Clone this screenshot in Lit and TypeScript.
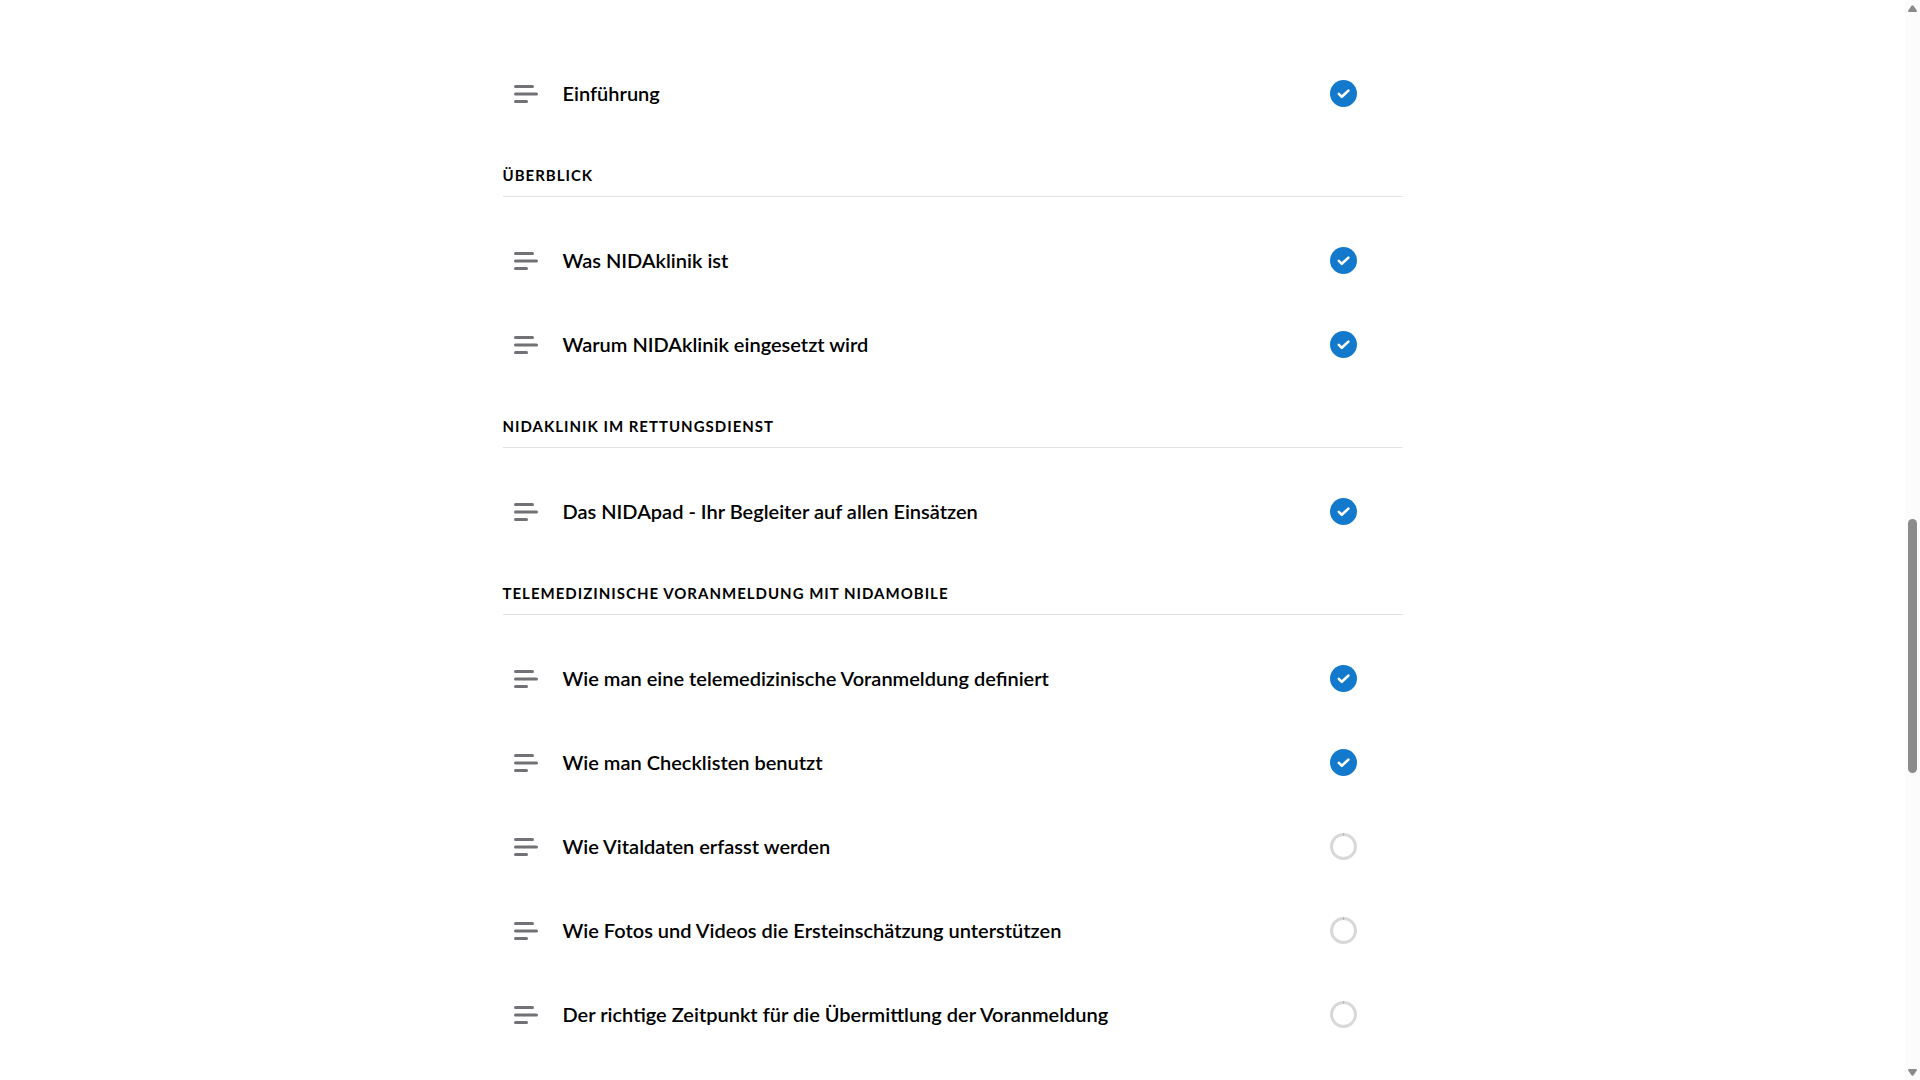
import { LitElement, html, css, svg } from "lit";
import { customElement, property } from "lit/decorators.js";

interface Lesson {
  title: string;
  done: boolean;
}

interface Section {
  title?: string;
  lessons: Lesson[];
}

const sections: Section[] = [
  { lessons: [{ title: "Einführung", done: true }] },
  {
    title: "Überblick",
    lessons: [
      { title: "Was NIDAklinik ist", done: true },
      { title: "Warum NIDAklinik eingesetzt wird", done: true },
    ],
  },
  {
    title: "NIDAklinik im Rettungsdienst",
    lessons: [{ title: "Das NIDApad - Ihr Begleiter auf allen Einsätzen", done: true }],
  },
  {
    title: "Telemedizinische Voranmeldung mit NIDAmobile",
    lessons: [
      { title: "Wie man eine telemedizinische Voranmeldung definiert", done: true },
      { title: "Wie man Checklisten benutzt", done: true },
      { title: "Wie Vitaldaten erfasst werden", done: false },
      { title: "Wie Fotos und Videos die Ersteinschätzung unterstützen", done: false },
      { title: "Der richtige Zeitpunkt für die Übermittlung der Voranmeldung", done: false },
    ],
  },
];

/* One lesson link: text icon, title and completion mark. */
@customElement("lesson-row")
export class LessonRow extends LitElement {
  @property() title = "";
  @property({ type: Boolean }) done = false;

  static styles = css`
    :host {
      display: block;
    }
    .row {
      display: flex;
      align-items: center;
      height: 84px;
      box-sizing: border-box;
      padding: 0 46px 0 11px;
      color: #000;
      text-decoration: none;
    }
    .lines {
      flex: none;
      width: 24px;
      height: 20px;
      margin-right: 25px;
    }
    .title {
      flex: 1;
      font-size: 20px;
      line-height: 30px;
      font-weight: 600;
    }
    .status {
      flex: none;
      width: 27px;
      height: 27px;
    }
  `;

  render() {
    const mark = this.done
      ? svg`<circle cx="13.5" cy="13.5" r="13.5" fill="#1379cd"></circle>
          <path d="M8.8 13.8l3 3 6.6-6.2" fill="none" stroke="#fff" stroke-width="2.6"
            stroke-linecap="round" stroke-linejoin="round"></path>`
      : svg`<circle cx="13.5" cy="13.5" r="12" fill="none" stroke="#d8d8d8" stroke-width="3"></circle>
          <path d="M13.5 0v3" stroke="#a9b8c4" stroke-width="1"></path>`;
    return html`<a class="row" href="#">
      <svg class="lines" viewBox="0 -2 24 20" aria-hidden="true">
        <g fill="#717176">
          <rect width="20" height="3" rx="1.5"></rect>
          <rect y="7.5" width="24" height="3" rx="1.5"></rect>
          <rect y="15" width="14" height="3" rx="1.5"></rect>
        </g>
      </svg>
      <span class="title">${this.title}</span>
      <svg class="status" viewBox="0 0 27 27" aria-hidden="true">${mark}</svg>
    </a>`;
  }
}

@customElement("app-root")
export class AppRoot extends LitElement {
  static styles = css`
    :host {
      display: grid;
      grid-template-columns: 1fr 15px;
      min-height: 100vh;
      background: #fff;
      color: #000;
      font-family: Lato, Carlito, "Open Sans", sans-serif;
    }
    .content {
      padding: 51px 24px 0;
    }
    .outline {
      max-width: 900px;
      margin: 0 auto;
    }
    .heading {
      margin: 0 0 21px;
      padding: 28px 0 9px;
      border-bottom: 1px solid #e2e2e2;
      font-size: 15px;
      line-height: 24px;
      font-weight: 700;
      letter-spacing: 1px;
      text-transform: uppercase;
    }
    .scrollbar {
      position: sticky;
      top: 0;
      height: 100vh;
      box-sizing: border-box;
      padding: 5px 3px 4px;
      display: flex;
      flex-direction: column;
      align-items: center;
      background: #fcfcfc;
    }
    .arrow {
      flex: none;
      width: 9px;
      height: 7px;
      fill: #8b8b8b;
    }
    .before {
      flex: 507;
    }
    .thumb {
      flex: 254;
      width: 9px;
      border-radius: 5px;
      background: #8b8b8b;
    }
    .after {
      flex: 296;
    }
  `;

  render() {
    return html`
      <main class="content">
        <div class="outline">
          ${sections.map(
            (s) => html`<section>
              ${s.title ? html`<h2 class="heading">${s.title}</h2>` : ""}
              ${s.lessons.map((l) => html`<lesson-row .title=${l.title} .done=${l.done}></lesson-row>`)}
            </section>`
          )}
        </div>
      </main>
      <div class="scrollbar" aria-hidden="true">
        <svg class="arrow" viewBox="0 0 9 7"><path d="M3.5.8q1-1.2 2 0L8.8 5.6Q9.3 7 8 7H1Q-.3 7 .2 5.6z"></path></svg>
        <div class="before"></div>
        <div class="thumb"></div>
        <div class="after"></div>
        <svg class="arrow" viewBox="0 0 9 7"><path d="M3.5 6.2q1 1.2 2 0L8.8 1.4Q9.3 0 8 0H1Q-.3 0 .2 1.4z"></path></svg>
      </div>
    `;
  }
}
